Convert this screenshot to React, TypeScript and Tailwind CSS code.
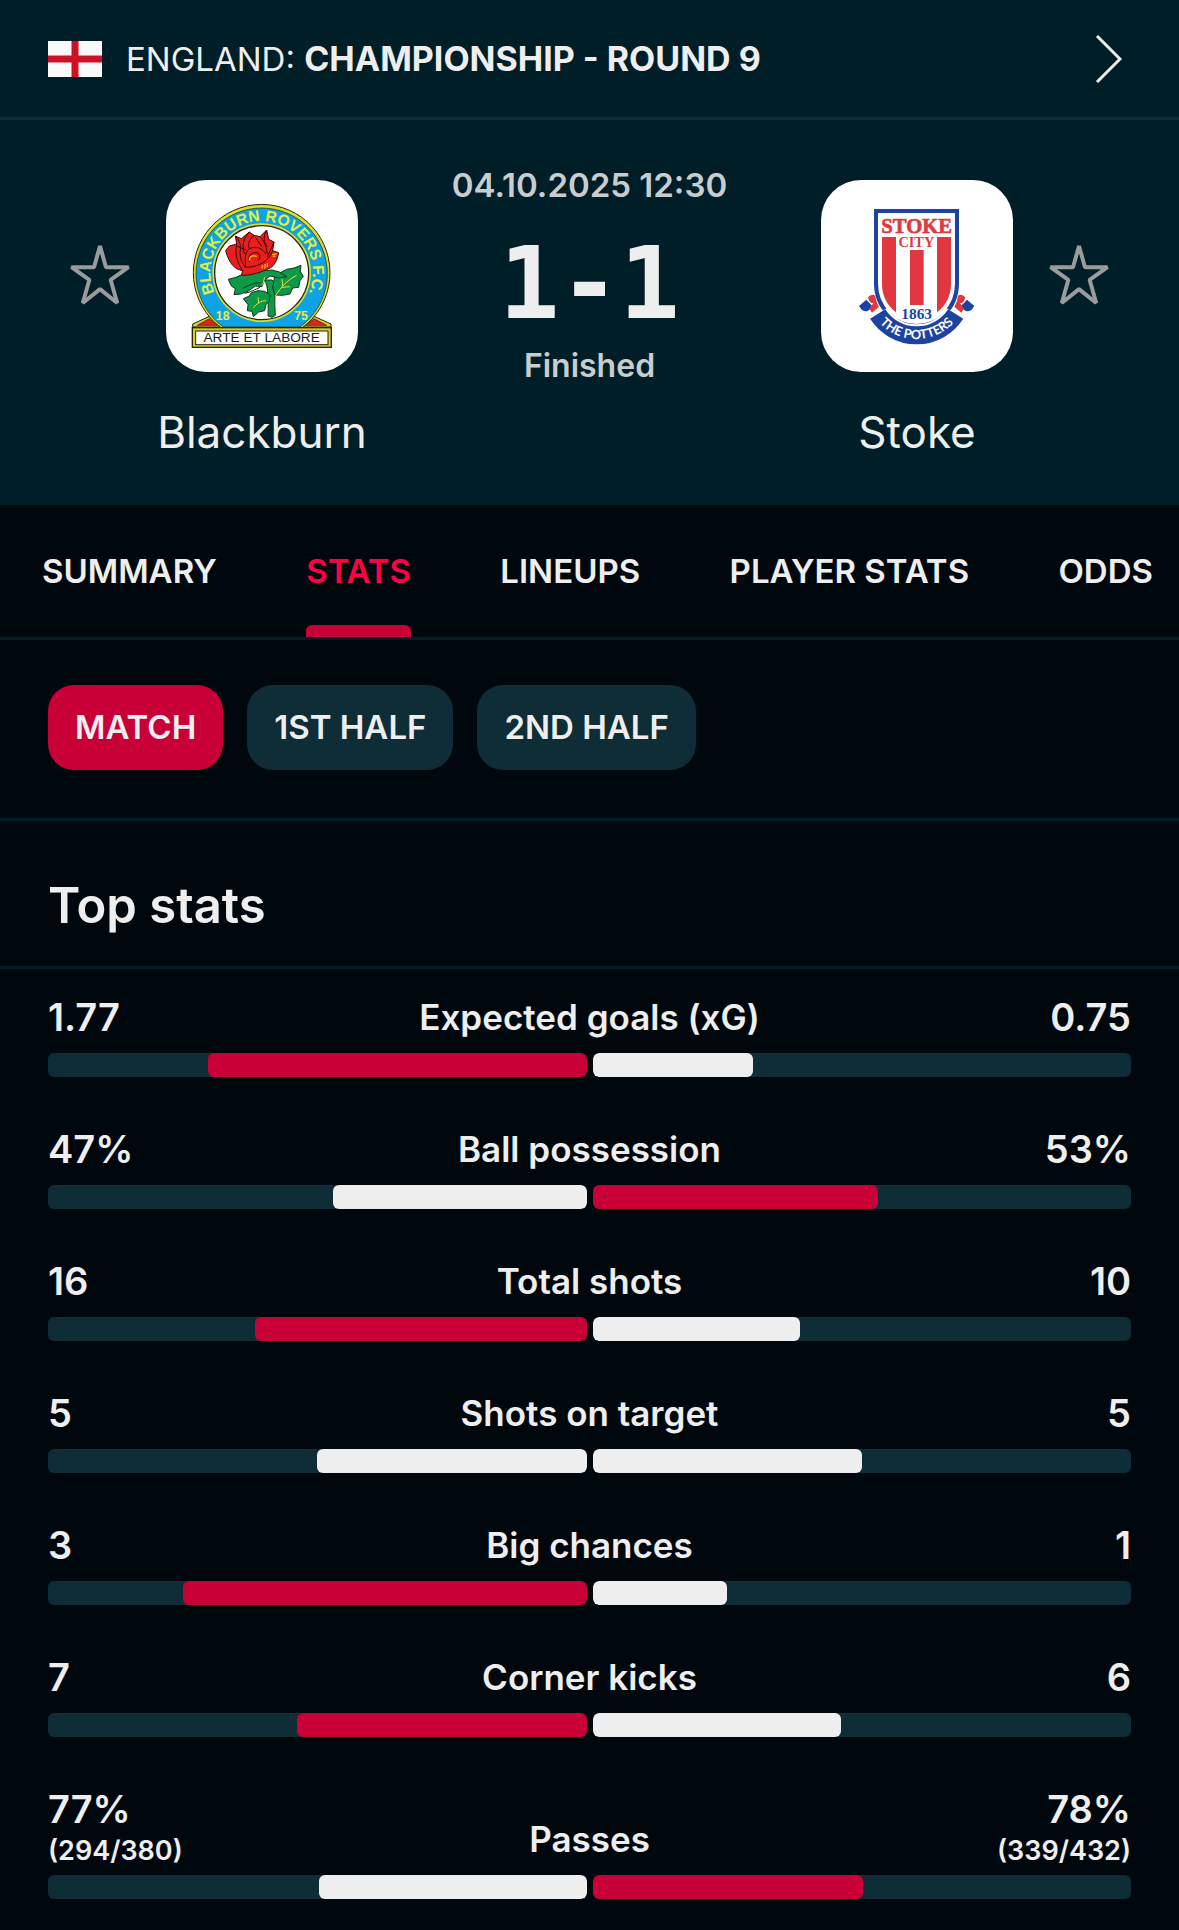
import React, { useState } from 'react';

interface Stat {
  label: string;
  home: number;
  away: number;
  homeText: string;
  awayText: string;
  homeDetail?: string;
  awayDetail?: string;
}

const TABS = ['SUMMARY', 'STATS', 'LINEUPS', 'PLAYER STATS', 'ODDS'];
const PERIODS = ['MATCH', '1ST HALF', '2ND HALF'];

const STATS: Stat[] = [
  { label: 'Expected goals (xG)', home: 1.77, away: 0.75, homeText: '1.77', awayText: '0.75' },
  { label: 'Ball possession', home: 47, away: 53, homeText: '47%', awayText: '53%' },
  { label: 'Total shots', home: 16, away: 10, homeText: '16', awayText: '10' },
  { label: 'Shots on target', home: 5, away: 5, homeText: '5', awayText: '5' },
  { label: 'Big chances', home: 3, away: 1, homeText: '3', awayText: '1' },
  { label: 'Corner kicks', home: 7, away: 6, homeText: '7', awayText: '6' },
  {
    label: 'Passes',
    home: 77,
    away: 78,
    homeText: '77%',
    awayText: '78%',
    homeDetail: '(294/380)',
    awayDetail: '(339/432)'
  }
];

const EnglandFlag = () => (
  <svg viewBox="0 0 54 36" className="w-[54px] h-9 shrink-0" aria-hidden="true">
    <rect width="54" height="36" fill="#fafafa" />
    <path d="M23.5 0h7v36h-7zM0 14.5h54v7H0z" fill="#ce1126" />
  </svg>
);

const StarIcon = () => (
  <svg viewBox="0 0 180 184" className="w-15 h-[61px]" fill="none" stroke="#999b9d" strokeWidth="12" strokeLinejoin="bevel" aria-hidden="true">
    <path d="M90 6 108 70H176L122 108 142 178 90 136 38 178 58 108 4 70H72Z" />
  </svg>
);

const BlackburnCrest = () => (
  <svg viewBox="0 0 576 576" className="w-full h-full" role="img" aria-label="Blackburn Rovers crest">
    <defs>
      <path id="rovers-arc" d="M154 355A154 154 0 1 1 420 355" />
    </defs>
    {/* Base wings */}
    <path d="M80 441V432L132 408H442L495 432V441Z" fill="#d8cb2a" stroke="#2a2310" strokeWidth="3" />
    <path d="M94 436 130 416 154 436ZM420 436 444 416 482 436Z" fill="#e2211c" stroke="#2a2310" strokeWidth="2" />
    {/* Ring */}
    <path d="M165 443A205 205 0 1 1 409 443Z" fill="#d8e02a" stroke="#2a2310" strokeWidth="3" />
    <path d="M172 441A197 197 0 1 1 402 441Z" fill="#0fa3e6" stroke="#2a2310" strokeWidth="2" />
    <circle cx="287" cy="278" r="145" fill="#fff" stroke="#d8e02a" strokeWidth="6" />
    <circle cx="287" cy="278" r="141" fill="#fff" stroke="#2a2310" strokeWidth="4" />
    <text fontFamily="'Liberation Sans', Arial, sans-serif" fontSize="47" fontWeight="700" fill="#e3f03c" textAnchor="middle">
      <textPath href="#rovers-arc" startOffset="50%">BLACKBURN ROVERS F.C.</textPath>
    </text>
    <g fontFamily="'Liberation Sans Narrow', 'Liberation Sans', sans-serif" fontSize="37" fontWeight="700" fill="#e3f03c" textAnchor="middle">
      <text x="170" y="419">18</text>
      <text x="405" y="419">75</text>
    </g>
    {/* Stem and leaves */}
    <g fill="#0c9a48" stroke="#12351f" strokeWidth="3" strokeLinejoin="round">
      <path d="M296 300C306 318 308 350 306 408L318 412 328 406C326 370 324 340 334 318L318 300Z" />
      <path d="M326 345 320 322 326 290 340 280 362 268 384 264 405 256 403 274 412 290 402 302 398 322 380 324 372 342 350 346Z" />
      <path d="M232 356 250 348 256 338 276 332 296 334 312 344 310 364 300 374 296 392 278 396 262 410 258 394 244 392 246 374Z" />
      <path d="M187 298 210 292 232 282 262 280 290 272 318 270 340 276 362 290 340 294 312 288 296 300 288 320 268 318 246 334 224 342 204 344 208 326 196 318Z" />
      <path d="M232 324C250 316 262 308 284 308M236 340C256 336 268 328 282 322" fill="none" />
    </g>
    <path d="M328 348C346 320 362 302 392 286M348 322 372 320M350 318 348 296M262 384C272 370 286 362 300 362M278 370 276 352M290 316 296 292" fill="none" stroke="#e3e03c" strokeWidth="3" />
    {/* Rose */}
    <g stroke="#3a0c0c" strokeWidth="3" strokeLinejoin="round">
      <path d="M179 212 190 198 212 192 208 168 226 176 250 156 264 166 282 170 302 150 308 178 324 186 320 212 338 218C334 240 326 256 312 264 286 276 262 286 226 286L230 272C206 268 190 252 179 212Z" fill="#e8201d" />
      <path d="M212 192C206 220 214 250 230 272M208 168C222 184 226 196 222 218 222 236 228 248 238 262M250 156C232 176 226 198 236 222M264 166C250 178 244 192 250 206M282 170C296 184 300 200 304 222M302 150C292 166 292 184 304 200M324 186 304 230M320 212C306 246 276 262 238 262M238 262C240 240 232 222 250 206 272 196 290 206 300 222M250 246C244 228 256 216 272 218 284 220 284 232 276 242M212 198 240 210M268 172 288 200" fill="none" />
    </g>
    <path d="M250 242C250 228 262 224 272 230M318 224 332 222M320 230 328 228M290 256 288 266M298 252 296 266M304 250 304 262" fill="none" stroke="#f2b21c" strokeWidth="4" />
    {/* Motto */}
    <rect x="79" y="443" width="417" height="59" fill="#d8cb2a" stroke="#2a2310" strokeWidth="4" />
    <rect x="89" y="453" width="397" height="41" fill="#fff" stroke="#2a2310" strokeWidth="3" />
    <text x="287" y="486" fontFamily="'Liberation Sans', Arial, sans-serif" fontSize="41" fill="#1b1b1b" textAnchor="middle">ARTE ET LABORE</text>
  </svg>
);

const StokeCrest = () => (
  <svg viewBox="0 0 576 576" className="w-full h-full" role="img" aria-label="Stoke City crest">
    <defs>
      <path id="potters-arc" d="M136 326A151 151 0 0 0 438 326" />
    </defs>
    {/* Shield */}
    <path d="M165 93H408V310C408 385 350 438 287 438 224 438 165 385 165 310Z" fill="#fff" stroke="#1c43a0" strokeWidth="12" />
    <g fill="#e0383e">
      <path d="M183 171H225V397C197 376 183 346 183 312Z" />
      <path d="M267 210H308V375H267Z" />
      <path d="M348 171H390V312C390 346 376 376 348 397Z" />
    </g>
    <g fontFamily="'Liberation Serif', serif" fontWeight="700" fill="#e0383e" textAnchor="middle">
      <text x="287" y="159" fontSize="62" stroke="#e0383e" strokeWidth="2">STOKE</text>
      <text x="286" y="202" fontSize="43">CITY</text>
    </g>
    {/* Ribbon */}
    <path d="M114 378 136 359 156 380 140 393Q128 396 121 388Z" fill="#1c43a0" />
    <path d="M460 378 438 359 418 380 434 393Q446 396 453 388Z" fill="#1c43a0" />
    <path d="M141 352Q150 341 162 346L167 366 174 380 153 398 145 386 158 368Q146 374 141 352Z" fill="#e0383e" />
    <path d="M433 352Q424 341 412 346L407 366 400 380 421 398 429 386 416 368Q428 374 433 352Z" fill="#e0383e" />
    <path d="M170 402A139 139 0 0 0 404 402" fill="none" stroke="#fff" strokeWidth="66" />
    <path d="M170 402A139 139 0 0 0 404 402" fill="none" stroke="#1c43a0" strokeWidth="54" />
    <text x="287" y="416" fontFamily="'Liberation Serif', serif" fontSize="46" fontWeight="700" fill="#1c43a0" textAnchor="middle">1863</text>
    <text fontFamily="Lato, sans-serif" fontSize="38" fontWeight="700" fill="#fff" textAnchor="middle">
      <textPath href="#potters-arc" startOffset="50%">THE POTTERS</textPath>
    </text>
  </svg>
);

interface TeamProps {
  name: string;
  children: React.ReactNode;
}

const Team: React.FC<TeamProps> = ({ name, children }) => (
  <div className="flex flex-col items-center w-48 pt-5">
    <div className="w-48 h-48 bg-white rounded-[40px] overflow-hidden">{children}</div>
    <h2 className="mt-8 text-[44px] leading-[56px] whitespace-nowrap">{name}</h2>
  </div>
);

const FavouriteButton: React.FC<{ team: string }> = ({ team }) => (
  <button aria-label={`Add ${team} to favourites`} className="h-48 mt-[18px] flex items-center">
    <StarIcon />
  </button>
);

const StatRow: React.FC<{ stat: Stat }> = ({ stat }) => {
  const total = stat.home + stat.away;
  const homeColor = stat.home > stat.away ? 'bg-[#c80037]' : 'bg-[#eeeeee]';
  const awayColor = stat.away > stat.home ? 'bg-[#c80037]' : 'bg-[#eeeeee]';

  return (
    <div>
      <div className="flex items-end justify-between font-semibold">
        <div className="flex-1">
          <div className="text-[38px] leading-[48px]">{stat.homeText}</div>
          {stat.homeDetail && <div className="mt-1.5 text-[27px] leading-6">{stat.homeDetail}</div>}
        </div>
        <div className="text-[35px] leading-[48px]">{stat.label}</div>
        <div className="flex-1 text-right">
          <div className="text-[38px] leading-[48px]">{stat.awayText}</div>
          {stat.awayDetail && <div className="mt-1.5 text-[27px] leading-6">{stat.awayDetail}</div>}
        </div>
      </div>
      <div className="mt-3 flex gap-1.5">
        <div className="flex-1 h-6 rounded-md bg-[#0f2d37] flex justify-end overflow-hidden">
          <div className={`h-full rounded-md ${homeColor}`} style={{ width: `${(stat.home / total) * 100}%` }} />
        </div>
        <div className="flex-1 h-6 rounded-md bg-[#0f2d37] overflow-hidden">
          <div className={`h-full rounded-md ${awayColor}`} style={{ width: `${(stat.away / total) * 100}%` }} />
        </div>
      </div>
    </div>
  );
};

const App: React.FC = () => {
  const [activeTab, setActiveTab] = useState('STATS');
  const [period, setPeriod] = useState('MATCH');

  return (
    <div className="min-h-screen bg-[#00080d] text-[#eeeeee] font-['Inter',sans-serif] overflow-hidden">
      {/* Competition */}
      <header className="bg-[#001e28]">
        <a href="#competition" className="flex items-center h-[120px] pl-12 pr-[57px] border-b-3 border-[#0f2d37]">
          <EnglandFlag />
          <span className="ml-6 text-[33px] leading-10 whitespace-nowrap">
            ENGLAND: <span className="text-[34px] font-bold">CHAMPIONSHIP - ROUND 9</span>
          </span>
          <svg viewBox="0 0 27 48" className="ml-auto w-[27px] h-12" fill="none" stroke="#eeeeee" strokeWidth="3" aria-hidden="true">
            <path d="M2 1 25 24 2 47" />
          </svg>
        </a>

        {/* Score */}
        <div className="flex justify-between px-[70px] pt-10 pb-[45px]">
          <div className="flex gap-9">
            <FavouriteButton team="Blackburn" />
            <Team name="Blackburn">
              <BlackburnCrest />
            </Team>
          </div>
          <div className="flex flex-col items-center text-[#c8cdd0] font-semibold">
            <div className="text-[33px] leading-[50px]">04.10.2025 12:30</div>
            <div className="mt-6 text-[100px] leading-[100px] font-bold font-['DejaVu_Sans_Mono',monospace] text-[#eeeeee]">1-1</div>
            <div className="mt-1.5 text-[32px] leading-[52px]">Finished</div>
          </div>
          <div className="flex gap-9">
            <Team name="Stoke">
              <StokeCrest />
            </Team>
            <FavouriteButton team="Stoke" />
          </div>
        </div>
      </header>

      {/* Tabs */}
      <nav className="flex justify-between h-[135px] pl-[42px] pr-[26px] border-b-3 border-[#001e28]">
        {TABS.map((tab) => (
          <button
            key={tab}
            onClick={() => setActiveTab(tab)}
            className={`flex flex-col justify-between h-full text-[33px] leading-[132px] font-semibold whitespace-nowrap ${
              activeTab === tab ? 'text-[#ff0046]' : ''
            }`}
          >
            <span className="h-[120px]">{tab}</span>
            {activeTab === tab && <span className="w-full h-3 rounded-t-md bg-[#c80037]" />}
          </button>
        ))}
      </nav>

      {/* Periods */}
      <div className="flex gap-6 px-12 pt-[45px] pb-12 border-b-3 border-[#001e28]">
        {PERIODS.map((item) => (
          <button
            key={item}
            onClick={() => setPeriod(item)}
            className={`h-[85px] px-[27px] rounded-[26px] text-[33px] font-semibold whitespace-nowrap ${
              period === item ? 'bg-[#c80037]' : 'bg-[#0f2d37]'
            }`}
          >
            {item}
          </button>
        ))}
      </div>

      {/* Stats */}
      <h3 className="px-12 pt-[54px] pb-[30px] text-[49px] leading-[61px] font-semibold border-b-3 border-[#001e28]">Top stats</h3>
      <div className="flex flex-col gap-12 px-12 pt-6 pb-7">
        {STATS.map((stat) => (
          <StatRow key={stat.label} stat={stat} />
        ))}
      </div>
    </div>
  );
};

export default App;
